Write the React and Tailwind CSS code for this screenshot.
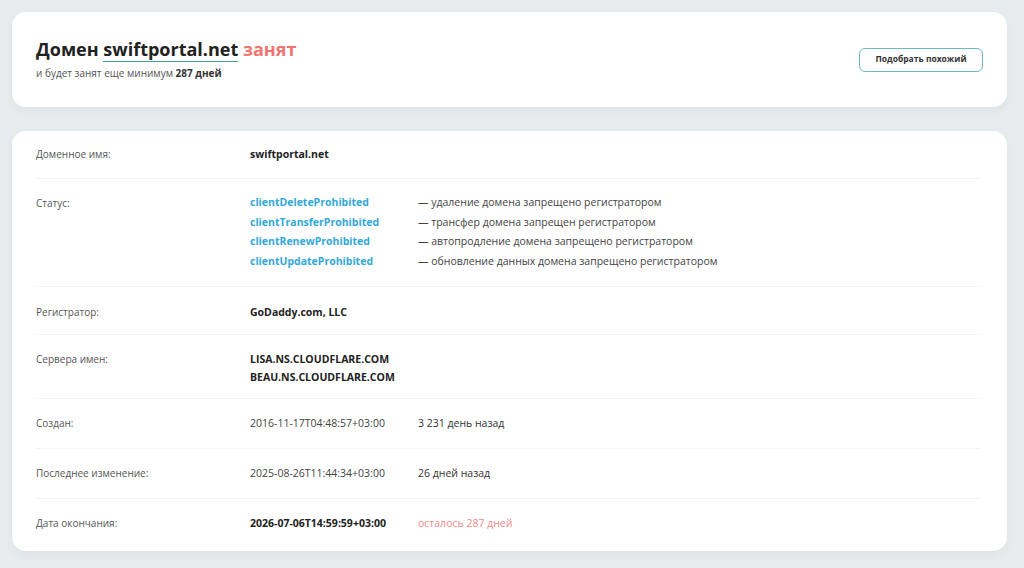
import React from 'react';

const statuses = [
  ['clientDeleteProhibited', '— удаление домена запрещено регистратором'],
  ['clientTransferProhibited', '— трансфер домена запрещен регистратором'],
  ['clientRenewProhibited', '— автопродление домена запрещено регистратором'],
  ['clientUpdateProhibited', '— обновление данных домена запрещено регистратором'],
];

const Row = ({ label, className = '', children, last }) => (
  <div className={`flex text-[10.5px] leading-[20px] ${last ? '' : 'border-b border-[#f4f5f6]'} ${className}`}>
    <div className="w-[214px] shrink-0 text-[10px] text-[#555]">{label}</div>
    <div className="flex-1">{children}</div>
  </div>
);

const App = () => {
  return (
    <div
      className="min-h-[568px] bg-[#e8ebee] pl-3 pr-[17px] pt-3 pb-4"
      style={{ fontFamily: '"Open Sans", "Liberation Sans", sans-serif' }}
    >
      {/* Шапка */}
      <div className="h-[95px] bg-white rounded-[14px] shadow-[0_4px_10px_rgba(0,0,0,0.04)] flex items-center justify-between pl-6 pr-6">
        <div>
          <h1 className="text-[18px] font-bold text-[#222] leading-[24px] mt-[-2px]">
            Домен{' '}
            <span className="border-b border-[#3aa39c]">swiftportal.net</span>{' '}
            <span className="text-[#f07470]">занят</span>
          </h1>
          <p className="text-[10px] text-[#555] leading-[14px] mt-[5px]">
            и будет занят еще минимум <span className="font-bold text-[#333]">287 дней</span>
          </p>
        </div>
        <button className="w-[124px] h-[24px] rounded-[6px] border border-[#6bb9c0] text-[8.5px] font-bold text-[#333]">
          Подобрать похожий
        </button>
      </div>

      {/* Данные домена */}
      <div className="mt-6 bg-white rounded-[14px] shadow-[0_4px_10px_rgba(0,0,0,0.04)] pl-6 pr-[27px] pb-[3px]">
        <Row label="Доменное имя:" className="pt-[13px] pb-[14px]">
          <div className="font-bold text-[#222]">swiftportal.net</div>
        </Row>

        <Row label="Статус:" className="pt-[14px] pb-[15px]">
          {statuses.map(([code, desc]) => (
            <div key={code} className="flex leading-[19.5px]">
              <div className="w-[168px] shrink-0 font-bold text-[#32a8d8]">{code}</div>
              <div className="text-[#444]">{desc}</div>
            </div>
          ))}
        </Row>

        <Row label="Регистратор:" className="pt-[15px] pb-[12px]">
          <div className="font-bold text-[#222]">GoDaddy.com, LLC</div>
        </Row>

        <Row label="Сервера имен:" className="pt-[14px] pb-[12px]">
          <div className="font-bold text-[#222] leading-[18px] mt-[1px]">
            <div>LISA.NS.CLOUDFLARE.COM</div>
            <div>BEAU.NS.CLOUDFLARE.COM</div>
          </div>
        </Row>

        <Row label="Создан:" className="pt-[14px] pb-[15px]">
          <div className="flex">
            <div className="w-[168px] shrink-0 text-[#444]">2016-11-17T04:48:57+03:00</div>
            <div className="text-[#333]">3 231 день назад</div>
          </div>
        </Row>

        <Row label="Последнее изменение:" className="pt-[14px] pb-[15px]">
          <div className="flex">
            <div className="w-[168px] shrink-0 text-[#444]">2025-08-26T11:44:34+03:00</div>
            <div className="text-[#333]">26 дней назад</div>
          </div>
        </Row>

        <Row label="Дата окончания:" className="pt-[14px] pb-[15px]" last>
          <div className="flex">
            <div className="w-[168px] shrink-0 font-bold text-[#222]">2026-07-06T14:59:59+03:00</div>
            <div className="text-[#f08a8a]">осталось 287 дней</div>
          </div>
        </Row>
      </div>
    </div>
  );
};

export default App;
